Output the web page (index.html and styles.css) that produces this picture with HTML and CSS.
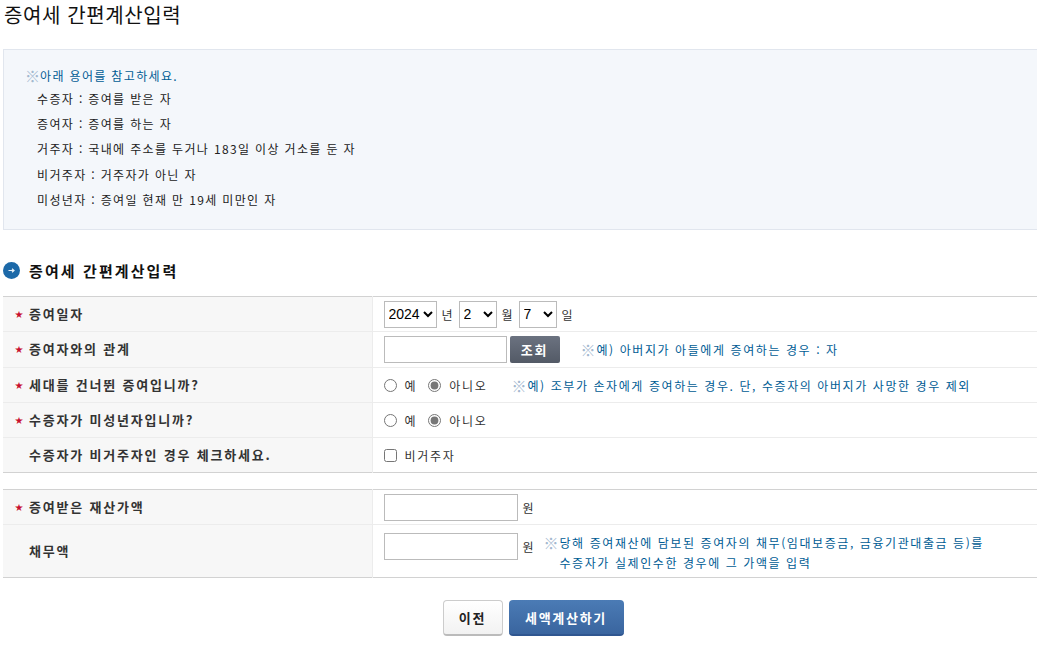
FILE: index.html
```html
<!DOCTYPE html>
<html lang="ko">
<head>
    <meta charset="UTF-8">
    <title>증여세 간편계산입력</title>
    <link rel="stylesheet" href="styles.css">
</head>
<body>
    <div class="wrap">
        <h1>증여세 간편계산입력</h1>
        <div class="info-box">
            <p class="info-title"><span class="mark">※</span>아래 용어를 참고하세요.</p>
            <p>수증자 : 증여를 받은 자</p>
            <p>증여자 : 증여를 하는 자</p>
            <p>거주자 : 국내에 주소를 두거나 183일 이상 거소를 둔 자</p>
            <p>비거주자 : 거주자가 아닌 자</p>
            <p>미성년자 : 증여일 현재 만 19세 미만인 자</p>
        </div>

        <h2>
            <svg class="bullet" width="17" height="17" viewBox="0 0 17 17">
                <circle cx="8.5" cy="8.5" r="8.5" fill="#1c69a8"/>
                <path d="M5.5 8.5h5.5M9 6.7l2 1.8-2 1.8" stroke="#e8f1f8" stroke-width="1.2" fill="none"/>
            </svg>
            증여세 간편계산입력
        </h2>

        <table class="form-table first">
            <tr class="h35">
                <th><span class="req">★</span>증여일자</th>
                <td>
                    <div class="cell">
                        <select class="sel-year"><option>2024</option></select><span class="unit">년</span>
                        <select class="sel-num"><option>2</option></select><span class="unit">월</span>
                        <select class="sel-num"><option>7</option></select><span class="unit">일</span>
                    </div>
                </td>
            </tr>
            <tr class="h36">
                <th><span class="req">★</span>증여자와의 관계</th>
                <td>
                    <div class="cell">
                        <input type="text" class="inp-rel">
                        <button class="btn-search">조회</button>
                        <span class="note note-rel"><span class="mark">※</span>예) 아버지가 아들에게 증여하는 경우 : 자</span>
                    </div>
                </td>
            </tr>
            <tr class="h35">
                <th><span class="req">★</span>세대를 건너뛴 증여입니까?</th>
                <td>
                    <div class="cell">
                        <label class="opt"><input type="radio" name="skip">예</label>
                        <label class="opt"><input type="radio" name="skip" checked>아니오</label>
                        <span class="note note-skip"><span class="mark">※</span>예) 조부가 손자에게 증여하는 경우. 단, 수증자의 아버지가 사망한 경우 제외</span>
                    </div>
                </td>
            </tr>
            <tr class="h35">
                <th><span class="req">★</span>수증자가 미성년자입니까?</th>
                <td>
                    <div class="cell">
                        <label class="opt"><input type="radio" name="minor">예</label>
                        <label class="opt"><input type="radio" name="minor" checked>아니오</label>
                    </div>
                </td>
            </tr>
            <tr class="h35">
                <th><span class="req"></span>수증자가 비거주자인 경우 체크하세요.</th>
                <td>
                    <div class="cell">
                        <label class="opt"><input type="checkbox">비거주자</label>
                    </div>
                </td>
            </tr>
        </table>

        <table class="form-table second">
            <tr class="h35">
                <th><span class="req">★</span>증여받은 재산가액</th>
                <td>
                    <div class="cell">
                        <input type="text" class="inp-money"><span class="unit">원</span>
                    </div>
                </td>
            </tr>
            <tr class="h53">
                <th><span class="req"></span>채무액</th>
                <td>
                    <div class="debt">
                        <input type="text" class="inp-money"><span class="unit">원</span>
                        <div class="note note-debt">
                            <span class="mark">※</span>
                            <p>당해 증여재산에 담보된 증여자의 채무(임대보증금, 금융기관대출금 등)를<br>수증자가 실제인수한 경우에 그 가액을 입력</p>
                        </div>
                    </div>
                </td>
            </tr>
        </table>

        <div class="btn-area">
            <button class="btn-prev">이전</button>
            <button class="btn-calc">세액계산하기</button>
        </div>
    </div>
</body>
</html>
```

FILE: styles.css
```css
body {
    margin: 0;
    overflow: hidden;
    font-family: "Noto Sans CJK KR", "Liberation Sans", sans-serif;
    font-size: 12px;
    color: #333;
    background-color: #fff;
}
p {
    margin: 0;
}
.wrap {
    width: 1034px;
    margin-left: 3px;
}
h1 {
    margin: 0 0 0 1px;
    height: 49px;
    font-size: 20px;
    line-height: 30px;
    font-weight: 400;
    color: #111;
    letter-spacing: 0.6px;
}
.info-box {
    box-sizing: border-box;
    height: 181px;
    padding: 13px 0 0 21px;
    background-color: #f4f7fb;
    border: 1px solid #e1e6ee;
    border-right: none;
    color: #222;
    letter-spacing: 1.35px;
}
.info-box p {
    height: 25.2px;
    line-height: 25px;
    padding-left: 12px;
}
.info-box .info-title {
    height: 23px;
    padding-left: 0;
    color: #005c94;
}
.mark {
    display: inline-block;
    width: 15px;
    font-size: 15px;
    line-height: 1;
    letter-spacing: 0;
    color: #a3b8cf;
    vertical-align: -1px;
}
h2 {
    display: flex;
    align-items: center;
    gap: 9px;
    margin: 31px 0 16px;
    height: 19px;
    font-size: 15px;
    font-weight: 700;
    color: #111;
    letter-spacing: 2.1px;
}
.form-table {
    width: 100%;
    border-collapse: collapse;
    table-layout: fixed;
    border-top: 1px solid #d2d2d2;
    border-bottom: 1px solid #d2d2d2;
}
.form-table.second {
    margin-top: 16px;
}
.form-table tr + tr {
    border-top: 1px solid #ececec;
}
.h35 {
    height: 35px;
}
.h36 {
    height: 36px;
}
.h53 {
    height: 52px;
}
.form-table th {
    width: 369px;
    padding: 0 0 2px 12px;
    box-sizing: border-box;
    text-align: left;
    font-size: 13px;
    font-weight: 700;
    color: #333;
    letter-spacing: 1.8px;
    background-color: #f7f7f7;
    border-right: 1px solid #ececec;
}
.form-table td {
    padding: 0 0 0 11px;
    color: #333;
    letter-spacing: 1.7px;
}
.req {
    display: inline-block;
    width: 14px;
    font-size: 8px;
    letter-spacing: 0;
    color: #c8102e;
    vertical-align: 2px;
}
.cell {
    display: flex;
    align-items: center;
}
select {
    height: 27px;
    font-family: "Liberation Sans", sans-serif;
    font-size: 14px;
    color: #000;
    background-color: #fff;
    border: 1px solid #bbb;
}
.sel-year {
    width: 53px;
}
.sel-num {
    width: 38px;
}
.unit {
    width: 12px;
    margin: 0 5px;
    letter-spacing: 0;
}
input[type="text"] {
    box-sizing: border-box;
    height: 27px;
    border: 1px solid #bbb;
}
.inp-rel {
    width: 123px;
}
.inp-money {
    width: 134px;
}
.btn-search {
    width: 50px;
    height: 27px;
    margin-left: 3px;
    border: none;
    border-radius: 2px;
    background: linear-gradient(#6b7280, #535a66);
    color: #fff;
    font-family: inherit;
    font-size: 13px;
    font-weight: 700;
    letter-spacing: 1.7px;
}
.opt {
    display: flex;
    align-items: center;
    margin-right: 11px;
}
.opt input {
    width: 13px;
    height: 13px;
    margin: 0 8px 0 0;
    accent-color: #777;
}
.note {
    color: #005c94;
    letter-spacing: 1.58px;
}
.note .mark {
    width: 16px;
}
.note-rel {
    margin-left: 21px;
}
.note-skip {
    margin-left: 13px;
}
.debt {
    display: flex;
    align-items: flex-start;
    height: 52px;
    padding-top: 8px;
    box-sizing: border-box;
}
.debt .unit {
    line-height: 27px;
}
.note-debt {
    display: flex;
    margin-left: 4px;
    line-height: 20px;
}
.note-debt .mark {
    line-height: 20px;
}
.btn-area {
    display: flex;
    justify-content: center;
    gap: 6px;
    padding-top: 22px;
    padding-left: 26px;
}
.btn-area button {
    height: 36px;
    border-radius: 4px;
    font-family: inherit;
    font-size: 13px;
    font-weight: 700;
    letter-spacing: 1.7px;
}
.btn-prev {
    width: 60px;
    border: 1px solid #ccc;
    border-bottom: 2px solid #bbb;
    background: linear-gradient(#fff, #f2f2f2);
    color: #222;
}
.btn-calc {
    width: 115px;
    border: none;
    border-bottom: 2px solid #2f5690;
    background: linear-gradient(#4b7bb5, #3a659f);
    color: #fff;
}
```
